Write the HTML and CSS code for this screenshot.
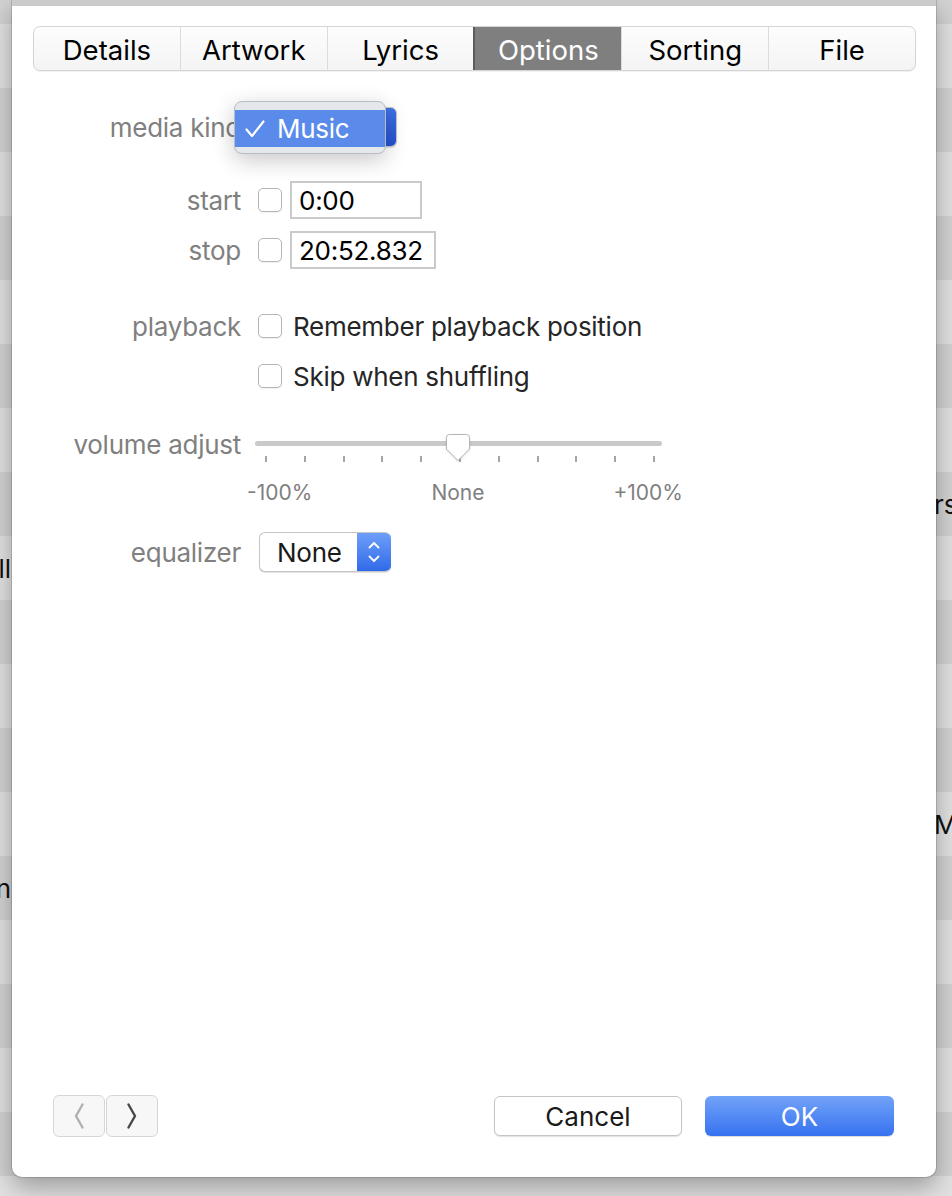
FILE: index.html
```html
<!DOCTYPE html>
<html>
<head>
<meta charset="utf-8">
<link rel="stylesheet" href="styles.css">
</head>
<body>
<div class="backdrop">
  <div class="brow dark first"></div>
  <div class="brow light"></div>
  <div class="brow dark"></div>
  <div class="brow light"></div>
  <div class="brow dark"></div>
  <div class="brow light"></div>
  <div class="brow dark"></div>
  <div class="brow light"></div>
  <div class="brow dark"><span class="bl"></span><span class="br">rs</span></div>
  <div class="brow light"><span class="bl">ll</span><span class="br"></span></div>
  <div class="brow dark"></div>
  <div class="brow light"></div>
  <div class="brow dark"></div>
  <div class="brow light"><span class="bl"></span><span class="br">M</span></div>
  <div class="brow dark"><span class="bl">n</span><span class="br"></span></div>
  <div class="brow light"></div>
  <div class="brow dark"></div>
  <div class="brow light"></div>
  <div class="brow dark"></div>
  <div class="brow light"></div>
</div>

<div class="sheet">
  <div class="sheet-top"></div>
  <div class="tabs">
    <div class="tab">Details</div>
    <div class="tab">Artwork</div>
    <div class="tab">Lyrics</div>
    <div class="tab active">Options</div>
    <div class="tab">Sorting</div>
    <div class="tab">File</div>
  </div>

  <div class="form">
    <div class="frow r-media">
      <div class="label">media kind</div>
      <div class="popwrap">
        <div class="popup kind">
          <span class="pop-text">Music</span>
          <span class="pop-arrow">
            <svg width="10" height="22" viewBox="0 0 10 22"><path d="M1 7 L5 3 L9 7 M1 15 L5 19 L9 15" fill="none" stroke="#fff" stroke-width="1.8" stroke-linecap="round" stroke-linejoin="round"/></svg>
          </span>
        </div>
        <div class="menu">
          <div class="menu-item">
            <span class="check"><svg width="20" height="18" viewBox="0 0 20 18"><polyline points="1.5,9.5 7,16 18.5,1.5" fill="none" stroke="#fff" stroke-width="2.2" stroke-linecap="round" stroke-linejoin="round"/></svg></span>
            <span>Music</span>
          </div>
        </div>
      </div>
    </div>

    <div class="frow r-start">
      <div class="label">start</div>
      <div class="ctl">
        <span class="cb"></span>
        <span class="field w-start">0:00</span>
      </div>
    </div>

    <div class="frow r-stop">
      <div class="label">stop</div>
      <div class="ctl">
        <span class="cb"></span>
        <span class="field w-stop">20:52.832</span>
      </div>
    </div>

    <div class="frow r-play">
      <div class="label">playback</div>
      <div class="ctl">
        <span class="cb"></span>
        <span class="cb-text">Remember playback position</span>
      </div>
    </div>

    <div class="frow r-skip">
      <div class="label"></div>
      <div class="ctl">
        <span class="cb"></span>
        <span class="cb-text">Skip when shuffling</span>
      </div>
    </div>

    <div class="frow r-vol">
      <div class="label vol-label">volume adjust</div>
      <div class="slider">
        <div class="track"></div>
        <svg class="thumb" width="26" height="29" viewBox="0 0 26 29"><path d="M4.5 1.5 H21.5 Q24.5 1.5 24.5 4.5 V16 L13 27.5 L1.5 16 V4.5 Q1.5 1.5 4.5 1.5 Z" fill="#fff" stroke="#b4b4b4" stroke-width="1"/></svg>
        <div class="ticks">
          <i></i><i></i><i></i><i></i><i></i><i></i><i></i><i></i><i></i><i></i><i></i>
        </div>
        <div class="tick-labels">
          <span class="tl-left">-100%</span>
          <span class="tl-mid">None</span>
          <span class="tl-right">+100%</span>
        </div>
      </div>
    </div>

    <div class="frow r-eq">
      <div class="label">equalizer</div>
      <div class="popup eq">
        <span class="pop-text">None</span>
        <span class="pop-arrow">
          <svg width="12" height="24" viewBox="0 0 12 24"><path d="M1.5 7.5 L6 3 L10.5 7.5 M1.5 16.5 L6 21 L10.5 16.5" fill="none" stroke="#fff" stroke-width="1.8" stroke-linecap="round" stroke-linejoin="round"/></svg>
        </span>
      </div>
    </div>
  </div>

  <div class="footer">
    <div class="nav">
      <span class="navbtn"><svg width="10" height="26" viewBox="0 0 10 26"><polyline points="8.5,1.5 2,13 8.5,24.5" fill="none" stroke="#b0b0b0" stroke-width="2.4" stroke-linecap="round" stroke-linejoin="round"/></svg></span>
      <span class="navbtn"><svg width="10" height="26" viewBox="0 0 10 26"><polyline points="1.5,1.5 8,13 1.5,24.5" fill="none" stroke="#474747" stroke-width="2.4" stroke-linecap="round" stroke-linejoin="round"/></svg></span>
    </div>
    <div class="actions">
      <span class="btn cancel">Cancel</span>
      <span class="btn ok">OK</span>
    </div>
  </div>
</div>
</body>
</html>
```

FILE: styles.css
```css
html, body {
  margin: 0;
  padding: 0;
}
body {
  width: 952px;
  height: 1196px;
  overflow: hidden;
  position: relative;
  font-family: "Inter", "Noto Sans", sans-serif;
  background: #d3d3d3;
}

/* backdrop table rows */
.backdrop {
  display: flex;
  flex-direction: column;
}
.brow {
  height: 64px;
  flex: none;
  display: flex;
  justify-content: space-between;
  align-items: center;
  font-size: 26px;
  color: #111;
}
.brow.first { height: 24px; }
.brow.light { background: #e2e2e2; }
.brow.dark { background: #d3d3d3; }
.bl {
  width: 11px;
  display: flex;
  justify-content: flex-end;
  overflow: hidden;
  white-space: nowrap;
}
.br {
  width: 18px;
  overflow: hidden;
  white-space: nowrap;
}

/* sheet dialog */
.sheet {
  position: absolute;
  left: 12px;
  top: 0;
  width: 924px;
  height: 1177px;
  background: #fff;
  border-radius: 0 0 10px 10px;
  box-shadow: 0 0 0 1px rgba(0,0,0,0.14), 0 10px 26px rgba(0,0,0,0.32);
  display: flex;
  flex-direction: column;
  letter-spacing: -0.27px;
}
.sheet-top {
  height: 6px;
  background: #cbcbcb;
  flex: none;
}

.tabs {
  display: flex;
  margin: 20px 20px 0 21px;
  height: 45px;
  box-sizing: border-box;
  border: 1px solid #d4d4d4;
  border-radius: 7px;
  background: linear-gradient(#fdfdfd, #f4f4f4);
  box-shadow: 0 1px 1px rgba(0,0,0,0.06);
  overflow: hidden;
  flex: none;
}
.tab {
  flex: 1;
  display: flex;
  align-items: center;
  justify-content: center;
  font-size: 27.5px;
  letter-spacing: 0;
  color: #000;
  border-left: 1px solid #dcdcdc;
  padding-top: 3px;
}
.tab:first-child { border-left: none; }
.tab.active {
  background: #7f7f7f;
  color: #fff;
  border-left: 2px solid #5c5c5c;
}

.form {
  display: flex;
  flex-direction: column;
  margin-top: 36px;
}
.frow {
  display: grid;
  grid-template-columns: 229px auto;
  column-gap: 17px;
  align-items: center;
  justify-content: start;
}
.label {
  text-align: right;
  color: #808080;
  font-size: 26px;
  white-space: nowrap;
}
.r-media { height: 40px; }
.r-start { height: 38px; margin-top: 34px; }
.r-stop { height: 38px; margin-top: 12px; }
.r-play { height: 38px; margin-top: 38px; }
.r-skip { height: 38px; margin-top: 12px; }
.r-vol { margin-top: 35px; align-items: start; }
.r-eq { height: 40px; margin-top: 27px; }

.ctl {
  display: flex;
  align-items: center;
}
.cb {
  width: 24px;
  height: 24px;
  box-sizing: border-box;
  border: 1.5px solid #b6b6b6;
  border-radius: 5px;
  background: #fff;
  box-shadow: 0 1px 1px rgba(0,0,0,0.06);
  flex: none;
}
.field {
  margin-left: 8px;
  height: 38px;
  box-sizing: border-box;
  border: 2px solid #cacaca;
  padding-left: 7px;
  font-size: 26px;
  color: #000;
  display: flex;
  align-items: center;
}
.w-start { width: 132px; }
.w-stop { width: 146px; }
.cb-text {
  margin-left: 11px;
  font-size: 26px;
  color: #262626;
}

/* popups */
.popwrap {
  position: relative;
  width: 139px;
  height: 40px;
}
.popup {
  display: flex;
  height: 40px;
  box-sizing: border-box;
  border: 1px solid #c6c6c6;
  border-radius: 6px;
  background: #fff;
  box-shadow: 0 1px 1px rgba(0,0,0,0.12);
  overflow: hidden;
}
.popup.kind { width: 139px; }
.popup.eq { width: 132px; margin-left: 1px; border-right: none; }
.pop-text {
  flex: 1;
  display: flex;
  align-items: center;
  padding-left: 17px;
  font-size: 26px;
  color: #1a1a1a;
}
.pop-arrow {
  width: 34px;
  display: flex;
  align-items: center;
  justify-content: center;
  background: linear-gradient(#6e9ff8, #306ae9);
}
.popup.kind .pop-arrow {
  background: linear-gradient(#3f72e6, #2551d2);
}

.menu {
  position: absolute;
  left: -24px;
  top: -6px;
  width: 152px;
  height: 53px;
  box-sizing: border-box;
  background: #e4e7ec;
  border: 1px solid #b9bcc1;
  border-radius: 8px;
  box-shadow: 0 6px 22px rgba(0,0,0,0.22);
  padding-top: 8px;
  overflow: hidden;
}
.menu-item {
  height: 37px;
  background: #5b8bea;
  color: #fff;
  display: flex;
  align-items: center;
  padding-left: 10px;
  font-size: 26px;
}
.check {
  width: 32px;
  display: flex;
  align-items: center;
}

/* slider */
.slider {
  position: relative;
  width: 407px;
  margin-left: -3px;
}
.track {
  height: 5px;
  margin-top: 11px;
  background: #c9c9c9;
  border-radius: 3px;
}
.thumb {
  position: absolute;
  left: 190px;
  top: 3px;
  filter: drop-shadow(0 1px 1px rgba(0,0,0,0.12));
}
.ticks {
  display: flex;
  justify-content: space-between;
  margin: 10px 7px 0 10px;
}
.ticks i {
  width: 2px;
  height: 6px;
  background: #a6a6a6;
}
.tick-labels {
  display: flex;
  margin-top: 19px;
  margin-left: -8px;
  font-size: 21px;
  line-height: 24px;
  letter-spacing: 0;
  color: #7f7f7f;
}
.tick-labels span { width: 100px; flex: none; }
.tl-left { text-align: left; }
.tl-mid { text-align: center; margin-left: 61px; }
.tl-right { text-align: right; margin-left: 75px; }
.vol-label { line-height: 30px; }

/* footer */
.footer {
  margin-top: auto;
  display: flex;
  justify-content: space-between;
  align-items: center;
  padding: 0 42px 40px 41px;
}
.nav {
  display: flex;
  gap: 1px;
}
.navbtn {
  width: 52px;
  height: 42px;
  box-sizing: border-box;
  border: 1px solid #d6d6d6;
  border-radius: 6px;
  background: #f7f7f7;
  display: flex;
  align-items: center;
  justify-content: center;
}
.actions {
  display: flex;
  gap: 23px;
}
.btn {
  height: 40px;
  box-sizing: border-box;
  border-radius: 6px;
  display: flex;
  align-items: center;
  justify-content: center;
  font-size: 26px;
  letter-spacing: 0;
}
.cancel {
  width: 188px;
  background: #fff;
  border: 1px solid #c6c6c6;
  box-shadow: 0 1px 1px rgba(0,0,0,0.12);
  color: #1a1a1a;
}
.ok {
  width: 189px;
  background: linear-gradient(#72a3f8, #3672f0);
  color: #fff;
  box-shadow: 0 1px 1px rgba(0,0,0,0.15);
}
```
